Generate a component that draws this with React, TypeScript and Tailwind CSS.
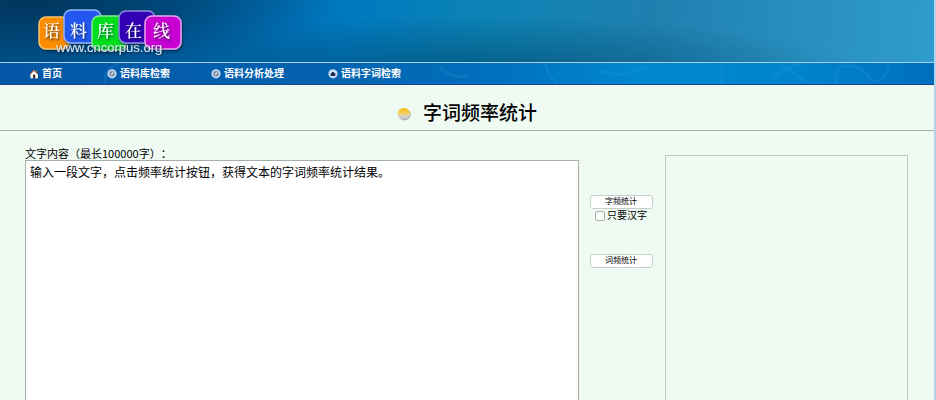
import React, { useState } from "react";

const navItems = [
  { label: "首页", icon: "home", width: "w-[78px]" },
  { label: "语料库检索", icon: "disc", width: "w-[104px]" },
  { label: "语料分析处理", icon: "disc", width: "w-[117px]" },
  { label: "语料字词检索", icon: "camera", width: "w-[120px]" },
];

const logoTiles = [
  { char: "语", x: 39, y: 17, w: 30, h: 32, fill: "#fb8c00", stroke: "#f5c26b", tx: 43 },
  { char: "料", x: 64, y: 10, w: 37, h: 33, fill: "#2458f0", stroke: "#8fb4f5", tx: 70 },
  { char: "库", x: 92, y: 16, w: 34, h: 34, fill: "#00df1c", stroke: "#8beb9c", tx: 97 },
  { char: "在", x: 119, y: 11, w: 36, h: 32, fill: "#3200b4", stroke: "#8f8fe0", tx: 125 },
  { char: "线", x: 145, y: 16, w: 36, h: 33, fill: "#c800d2", stroke: "#e6a5ee", tx: 153 },
];

function Logo() {
  return (
    <svg width="200" height="62" viewBox="0 0 200 62" role="img" aria-label="语料库在线">
      <defs>
        <filter id="shade" x="-20%" y="-20%" width="150%" height="150%">
          <feDropShadow dx="1" dy="1.5" stdDeviation="1" floodColor="#00203c" floodOpacity="0.8" />
        </filter>
      </defs>
      {logoTiles.map((tile) => (
        <rect
          key={tile.char}
          x={tile.x}
          y={tile.y}
          width={tile.w}
          height={tile.h}
          rx="7"
          fill={tile.fill}
          stroke={tile.stroke}
          strokeWidth="1.5"
          filter="url(#shade)"
        />
      ))}
      <g filter="url(#shade)" fill="#fff" className="font-['Noto_Serif_CJK_SC','Noto_Sans_CJK_SC',serif] text-[17px] font-medium">
        {logoTiles.map((tile) => (
          <text key={tile.char} x={tile.tx} y="37">
            {tile.char}
          </text>
        ))}
      </g>
      <text x="56" y="52" fill="#dbe6ec" filter="url(#shade)" className="font-['Liberation_Sans',sans-serif] text-[13px]">
        www.cncorpus.org
      </text>
    </svg>
  );
}

function NavIcon({ kind }: { kind: string }) {
  if (kind === "home") {
    return (
      <svg width="10" height="10" viewBox="0 0 10 10" aria-hidden="true">
        <path d="M6.8 1.2h1.3v3H6.8z" fill="#4c9a56" />
        <path d="M5 .8 9 4.8v4.4H1.4V4.8z" fill="#fbf6ef" />
        <path d="M1 5.2 5 1.2l4 4" fill="none" stroke="#8a5238" strokeWidth="1.1" />
        <path d="M4.1 5.6h2v3.6h-2z" fill="#3b1d18" />
      </svg>
    );
  }
  return (
    <svg width="10" height="10" viewBox="0 0 10 10" aria-hidden="true">
      <circle cx="5" cy="4.8" r="4.6" fill="#c3d9f4" />
      <circle cx="5" cy="4.8" r="2.8" fill={kind === "camera" ? "#dce6f4" : "#7e8ea6"} />
      {kind === "camera" ? (
        <path d="M2.7 4.1h1l.5-1.1h1.6l.5 1.1h1V7H2.7z" fill="#1c2f5a" />
      ) : (
        <path d="M3.6 5.8 6 2.8l.8.7-2.4 3z" fill="#d5dfeb" />
      )}
    </svg>
  );
}

function NavPattern() {
  return (
    <svg
      className="absolute inset-0 h-full w-full"
      viewBox="0 0 934 21"
      preserveAspectRatio="none"
      fill="none"
      stroke="#2d9fdc"
      strokeOpacity="0.2"
      strokeWidth="3"
      aria-hidden="true"
    >
      <path d="M105 21q-2-16 14-20M440 5q12 12 30 7M545 0q4 14 12 21M600 8q24 8 46-4M722 0v21M774 15q12-12 26-14M780 2l30 19M836 21q-4-18 12-18t24 16q16-2 16-19" />
    </svg>
  );
}

export default function App() {
  const [text, setText] = useState("输入一段文字，点击频率统计按钮，获得文本的字词频率统计结果。");
  const [hanziOnly, setHanziOnly] = useState(false);

  const buttonClass =
    "h-[14px] w-[63px] rounded-[3px] border border-[#c6cfca] bg-white text-center text-[8px] leading-[12px] text-black";

  return (
    <div className="h-screen overflow-x-hidden overflow-y-auto border-r-2 border-[#b5d3ed] bg-[#effbf2] font-['Liberation_Sans','Noto_Sans_CJK_SC',sans-serif] text-black [scrollbar-width:none]">
      <header>
        <div className="h-[62px] bg-[radial-gradient(ellipse_32%_110%_at_4%_0%,rgba(0,35,60,0.6),rgba(0,45,75,0.45)_45%,transparent),radial-gradient(ellipse_42%_95%_at_50%_120%,rgba(0,70,105,0.65),transparent),linear-gradient(95deg,#00508a_0%,#005fa3_20%,#0079c0_37%,#0c83b5_52%,#1f80b0_70%,#2f9ccd_100%)]">
          <a href="#" className="inline-block">
            <Logo />
          </a>
        </div>
        <nav className="relative h-[23px] border-t border-b border-t-[#a9d0ec] border-b-[#203f8e] bg-[linear-gradient(90deg,#0457a6_0%,#0463b0_35%,#0070bd_53%,#0087ce_68%,#0085cc_85%,#006fbd_100%)]">
          <NavPattern />
          <ul className="relative flex h-full items-center pl-[29px]">
            {navItems.map((item) => (
              <li key={item.label} className={item.width}>
                <a href="#" className="flex items-center gap-[3px] text-[10px] leading-[14px] font-bold whitespace-nowrap text-white">
                  <NavIcon kind={item.icon} />
                  {item.label}
                </a>
              </li>
            ))}
          </ul>
        </nav>
      </header>

      <main>
        {/* Page title */}
        <div className="flex h-[46px] items-center justify-center gap-3 border-b border-[#a9b0ab] pt-[12px]">
          <svg width="14" height="14" viewBox="0 0 14 14" aria-hidden="true">
            <defs>
              <linearGradient id="dot" x1="0" y1="0" x2="0" y2="1">
                <stop offset="0.1" stopColor="#f3bd12" />
                <stop offset="0.45" stopColor="#f3d262" />
                <stop offset="0.75" stopColor="#d5d5d8" />
                <stop offset="1" stopColor="#b4b6ba" />
              </linearGradient>
            </defs>
            <ellipse cx="7.5" cy="7.7" rx="6.2" ry="5.9" fill="#aeb3b3" />
            <ellipse cx="6.8" cy="6.8" rx="6.2" ry="5.8" fill="url(#dot)" />
          </svg>
          <h1 className="text-[19px] leading-[24px] font-medium">字词频率统计</h1>
        </div>

        {/* Input, actions and result */}
        <form
          className="grid grid-cols-[minmax(0,554fr)_86px_minmax(0,243fr)] pt-4 pr-[26px] pl-[25px]"
          onSubmit={(e) => e.preventDefault()}
        >
          <div>
            <label
              htmlFor="content"
              className="block font-['Noto_Sans_CJK_SC',sans-serif] text-[11px] leading-[13px] [text-spacing-trim:space-all]"
            >
              文字内容（最长100000字）：
            </label>
            <textarea
              id="content"
              rows={20}
              value={text}
              onChange={(e) => setText(e.target.value)}
              className="block w-full resize-none border border-[#a5b0aa] bg-white px-1 py-[3px] text-[12px] leading-[18px]"
            />
          </div>

          <div className="flex flex-col items-center pt-[48px] pr-[2px]">
            <button type="button" className={buttonClass}>
              字频统计
            </button>
            <label className="flex h-[14px] items-center gap-[2px] text-[10px] leading-[14px]">
              <input
                type="checkbox"
                checked={hanziOnly}
                onChange={(e) => setHanziOnly(e.target.checked)}
                className="size-[10px] appearance-none rounded-[2px] border border-[#a9b3ad] bg-white checked:bg-[#3b82f6]"
              />
              只要汉字
            </label>
            <button type="button" className={`mt-[31px] ${buttonClass}`}>
              词频统计
            </button>
          </div>

          <output htmlFor="content" className="mt-2 block border border-[#bfc8c2]" />
        </form>
      </main>
    </div>
  );
}
